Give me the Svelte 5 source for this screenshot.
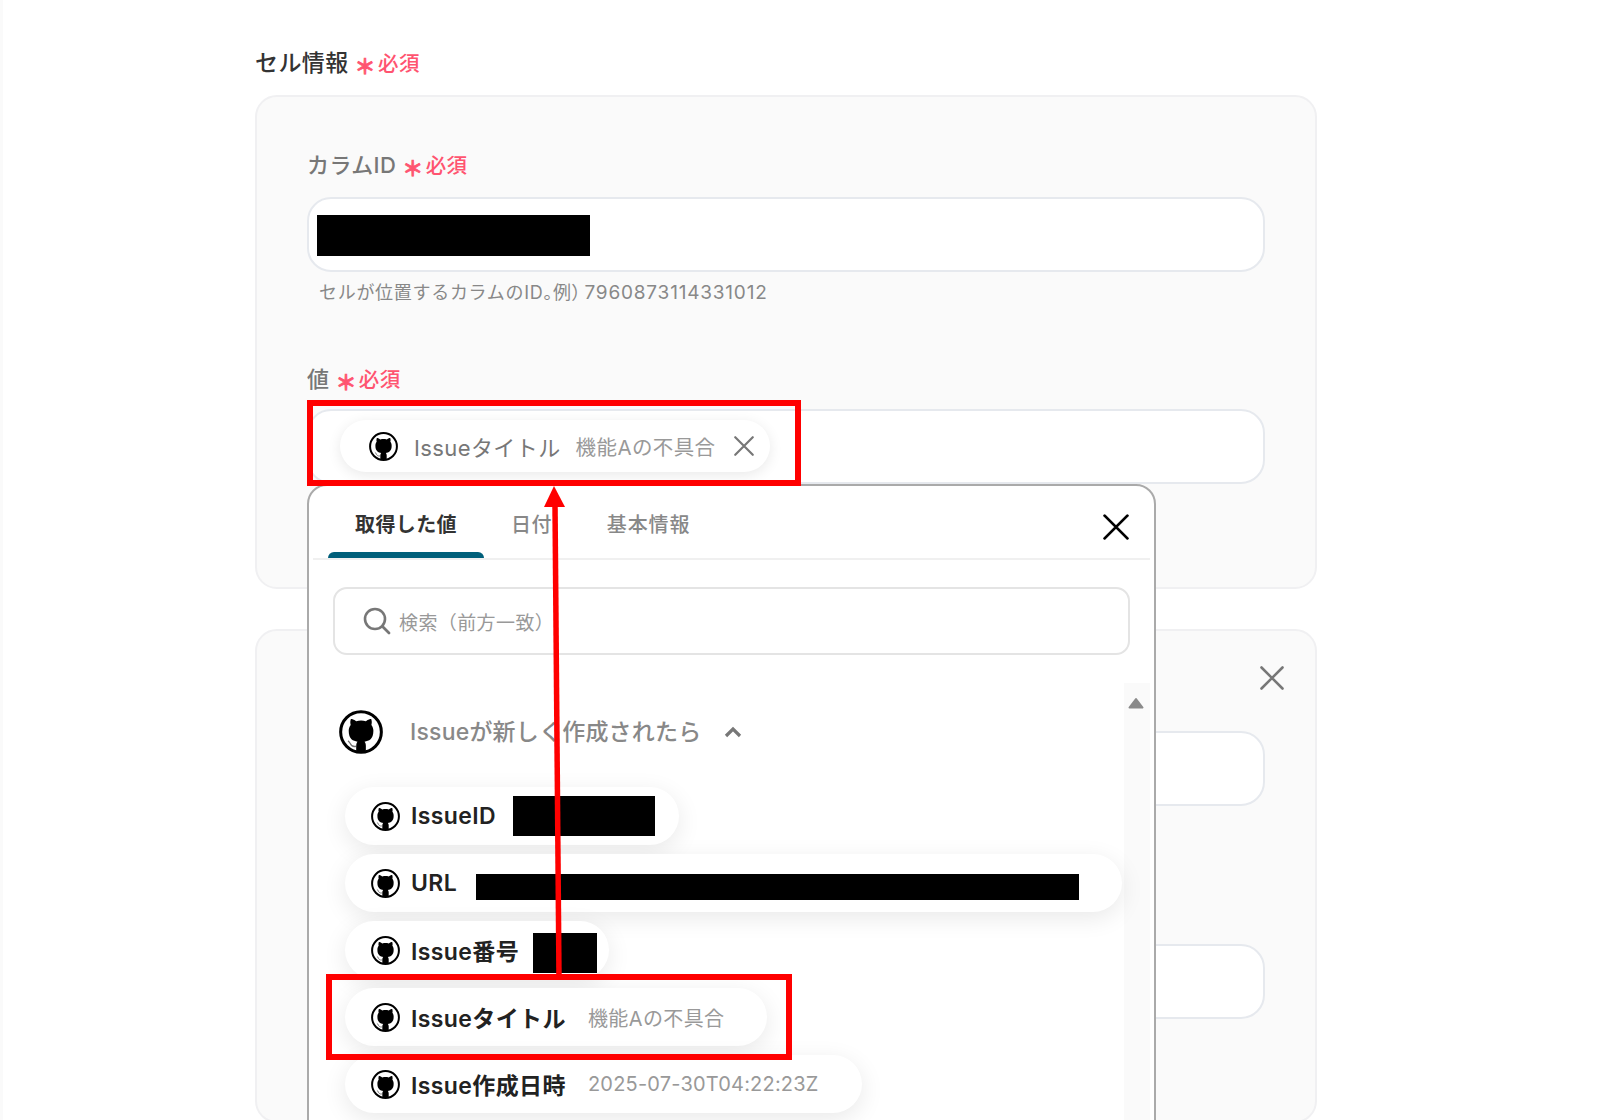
<script>
  const pills = [
    { label: 'IssueID', redact: [142, 40], gap: 17, pad: 24 },
    { label: 'URL', redact: [603, 26], gap: 19, wide: true, drop: 7 },
    { label: 'Issue番号', redact: [64, 40], gap: 14, pad: 12, drop: 6 },
    { label: 'Issueタイトル', value: '機能Aの不具合', pad: 42 },
    { label: 'Issue作成日時', value: '2025-07-30T04:22:23Z', pad: 43, tight: true }
  ];
</script>

{#snippet gh(cls)}
  <svg class={cls} viewBox="0 0 16 16" aria-hidden="true">
    <circle cx="8" cy="8" r="7.4" fill="#fff" stroke="#000" stroke-width="1.1" />
    <g transform="translate(8 0) scale(.88 1) translate(-8 0)">
      <path fill="#000" d="M6.02 15.3c0-.19-.01-.82-.01-1.59L6.05 12.6c.07-.52.28-.87.51-1.07-1.78-.2-3.64-.89-3.64-3.95 0-.87.31-1.59.82-2.15-.08-.2-.36-1.02.08-2.12 0 0 .67-.21 2.2.82.64-.18 1.32-.27 2-.27.68 0 1.36.09 2 .27 1.53-1.04 2.2-.82 2.2-.82.44 1.1.16 1.92.08 2.12.51.56.82 1.28.82 2.15 0 3.07-1.87 3.75-3.65 3.95.29.25.54.73.54 1.48L10 15.3z" />
      <path fill="none" stroke="#000" stroke-width=".5" opacity=".55" d="M6 13.2c-1.6.3-2.2-.4-2.5-1.1-.2-.4-.5-.7-.9-.9" />
    </g>
  </svg>
{/snippet}

{#snippet cross(cls)}
  <svg class={cls} viewBox="0 0 24 24" aria-hidden="true">
    <path d="M1.5 1.5 22.5 22.5M22.5 1.5 1.5 22.5" fill="none" stroke="currentColor" stroke-width="2.6" stroke-linecap="round" />
  </svg>
{/snippet}

{#snippet req()}
  <span class="ast">＊</span><span class="must">必須</span>
{/snippet}

<div class="root">
  <div class="edge"></div>
  <main class="page">
    <h2 class="title">セル情報{@render req()}</h2>

    <section class="card first">
      <div class="label">カラムID{@render req()}</div>
      <div class="input"><span class="black"></span></div>
      <p class="help">セルが位置するカラムのID<span class="punct">。例）</span><span class="digits">7960873114331012</span></p>
      <div class="label val">値{@render req()}</div>
      <div class="input chipbox">
        <div class="chip">
          {@render gh('ico')}
          <span class="chipname">Issueタイトル</span>
          <span class="chipval">機能Aの不具合</span>
          {@render cross('chipx')}
        </div>
      </div>
    </section>

    <section class="card second">
      {@render cross('cardx')}
      <div class="input"></div>
      <div class="input lower"></div>
    </section>
  </main>

  <div class="popup">
    <div class="tabs">
      <span class="tab on">取得した値</span>
      <span class="tab">日付</span>
      <span class="tab wider">基本情報</span>
      {@render cross('popx')}
    </div>
    <div class="search">
      <svg class="lens" viewBox="0 0 28 28" aria-hidden="true">
        <circle cx="12" cy="12" r="10" fill="none" stroke="#777" stroke-width="2.6" />
        <path d="M19.5 19.5 26 26" stroke="#777" stroke-width="2.8" stroke-linecap="round" />
      </svg>
      <span>検索（前方一致）</span>
    </div>
    <div class="list">
      <div class="scroll">
        <svg viewBox="0 0 16 12" aria-hidden="true"><path d="M8 2 14.5 10.5H1.5z" fill="#8a8a8a" stroke="#8a8a8a" stroke-width="2" stroke-linejoin="round" /></svg>
      </div>
      <div class="group">
        {@render gh('bigico')}
        <span class="gname">Issueが新しく作成されたら</span>
        <svg class="chev" viewBox="0 0 18 12" aria-hidden="true">
          <path d="M2 10 9 3l7 7" fill="none" stroke="#777" stroke-width="3.2" />
        </svg>
      </div>
      <div class="pills">
        {#each pills as p}
          <div class="pill" class:wide={p.wide} style="padding-right:{p.pad ?? 26}px">
            {@render gh('ico')}
            <span class="pname">{p.label}</span>
            {#if p.value}<span class="pval" class:tight={p.tight}>{p.value}</span>{/if}
            {#if p.redact}
              <span class="redact" style="width:{p.redact[0]}px;height:{p.redact[1]}px;margin-left:{p.gap}px;margin-top:{p.drop ?? 0}px"></span>
            {/if}
          </div>
        {/each}
      </div>
    </div>
  </div>

  <svg class="marks" viewBox="0 0 1600 1120" aria-hidden="true">
    <rect x="310" y="403" width="488" height="80" fill="none" stroke="#f00" stroke-width="6" />
    <rect x="329" y="977" width="460" height="80" fill="none" stroke="#f00" stroke-width="6" />
    <path d="M559 977 555 505" fill="none" stroke="#f00" stroke-width="5.5" />
    <path d="M554 486 565 507H544z" fill="#f00" />
  </svg>
</div>

<style>
  :global(body) {
    margin: 0;
    background: #fff;
  }
  .root {
    position: relative;
    width: 1600px;
    height: 1120px;
    overflow: hidden;
    background: #fff;
    font-family: Inter, "Noto Sans CJK JP", sans-serif;
    letter-spacing: 0.4px;
  }
  .marks {
    position: absolute;
    left: 0;
    top: 0;
    width: 1600px;
    height: 1120px;
    pointer-events: none;
  }
  .edge {
    position: absolute;
    left: 0;
    top: 0;
    bottom: 0;
    width: 3px;
    background: #fafafa;
  }
  .page {
    width: 1062px;
    margin-left: 255px;
    padding-top: 47px;
    box-sizing: border-box;
  }
  .title {
    margin: 0 0 15px;
    height: 33px;
    font-size: 23px;
    line-height: 33px;
    font-weight: 500;
    color: #333;
  }
  .ast {
    display: inline-block;
    margin-left: 6px;
    font-family: "Noto Sans CJK JP", sans-serif;
    font-size: 21px;
    font-weight: 700;
    line-height: 20px;
    vertical-align: -3px;
    color: #ff5470;
    -webkit-text-stroke: 0.7px #ff5470;
  }
  .must {
    margin-left: 2px;
    font-size: 20.5px;
    font-weight: 500;
    color: #ff5470;
  }
  .card {
    box-sizing: border-box;
    border: 2px solid #f0f0f2;
    border-radius: 22px;
    background: #fafafa;
    padding: 0 50px;
    position: relative;
  }
  .first {
    height: 494px;
    padding-top: 52px;
  }
  .second {
    height: 494px;
    margin-top: 40px;
    padding-top: 100px;
  }
  .label {
    height: 33px;
    font-size: 22px;
    line-height: 33px;
    font-weight: 500;
    color: #777;
    margin-bottom: 15px;
  }
  .val {
    margin-bottom: 13px;
    margin-top: 57px;
  }
  .input {
    box-sizing: border-box;
    height: 75px;
    border: 2px solid #e6e9ee;
    border-radius: 24px;
    background: #fff;
    padding: 16px 8px;
  }
  .black {
    display: block;
    width: 273px;
    height: 41px;
    background: #000;
  }
  .help {
    margin: 8px 0 0 12px;
    height: 26px;
    font-size: 18px;
    line-height: 26px;
    letter-spacing: 0.7px;
    color: #888;
  }
  .punct {
    font-feature-settings: "palt";
  }
  .digits {
    margin-left: 3px;
    font-size: 19px;
    letter-spacing: 0.8px;
  }
  .chipbox {
    padding: 9px 31px;
  }
  .chip {
    display: inline-flex;
    align-items: center;
    height: 52px;
    width: 430px;
    box-sizing: border-box;
    padding-left: 29px;
    border-radius: 26px;
    background: #fff;
    box-shadow: 0 3px 14px rgba(0, 0, 0, 0.09);
  }
  .ico {
    width: 29px;
    height: 29px;
    flex: none;
  }
  .chipname {
    margin-left: 16px;
    font-size: 22px;
    color: #777;
  }
  .chipval {
    margin-left: 15px;
    font-size: 20.5px;
    color: #999;
  }
  .chip :global(.chipx) {
    width: 20px;
    height: 20px;
    margin-left: 18px;
    color: #777;
  }
  .second :global(.cardx) {
    position: absolute;
    right: 31px;
    top: 35px;
    width: 24px;
    height: 24px;
    color: #777;
  }
  .lower {
    margin-top: 138px;
  }
  .popup {
    position: absolute;
    left: 307px;
    top: 484px;
    width: 849px;
    height: 680px;
    box-sizing: border-box;
    border: 2px solid #aaa;
    border-radius: 20px;
    background: #fff;
    padding: 0 4px;
  }
  .tabs {
    display: flex;
    align-items: center;
    height: 74px;
    border-bottom: 2px solid #f0f0f0;
    padding-left: 15px;
    position: relative;
    box-sizing: border-box;
  }
  .tab {
    position: relative;
    box-sizing: border-box;
    height: 72px;
    line-height: 78px;
    padding: 0 27px;
    font-size: 20px;
    font-weight: 500;
    color: #888;
  }
  .tab + .tab {
    padding: 0;
    margin-left: 27px;
  }
  .tab + .tab + .tab {
    margin-left: 55px;
  }
  .wider {
    letter-spacing: 0.9px;
  }
  .on {
    font-weight: 700;
    color: #333;
  }
  .on::after {
    content: "";
    position: absolute;
    left: 0;
    right: 0;
    bottom: 0;
    height: 6px;
    border-radius: 6px 6px 0 0;
    background: #005f7a;
  }
  .tabs :global(.popx) {
    position: absolute;
    right: 21px;
    top: 28px;
    width: 26px;
    height: 26px;
    color: #000;
  }
  .search {
    display: flex;
    align-items: center;
    box-sizing: border-box;
    height: 68px;
    margin: 27px 20px 0 20px;
    padding-left: 28px;
    border: 2px solid #e4e4e4;
    border-radius: 14px;
    font-size: 19px;
    color: #999;
  }
  .lens {
    width: 28px;
    height: 28px;
    margin-right: 8px;
  }
  .list {
    position: relative;
    padding-left: 27px;
    margin-top: 28px;
  }
  .scroll {
    position: absolute;
    right: 0;
    top: 0;
    width: 26px;
    height: 440px;
    background: #fafafa;
  }
  .scroll svg {
    display: block;
    width: 16px;
    height: 12px;
    margin: 14px 6px 0 4px;
  }
  .group {
    display: flex;
    align-items: center;
    height: 44px;
    margin-top: 27px;
    position: absolute;
    top: 0;
    left: 26px;
  }
  .bigico {
    width: 44px;
    height: 44px;
    flex: none;
  }
  .gname {
    margin-left: 27px;
    margin-bottom: 4px;
    font-size: 23px;
    font-weight: 500;
    letter-spacing: 0.2px;
    color: #888;
  }
  .chev {
    width: 18px;
    height: 12px;
    margin-left: 23px;
  }
  .pills {
    position: relative;
    padding-top: 104px;
    display: flex;
    flex-direction: column;
    align-items: flex-start;
    gap: 9px;
  }
  .pill {
    display: flex;
    align-items: center;
    height: 58px;
    box-sizing: border-box;
    padding-left: 26px;
    margin-left: 5px;
    border-radius: 29px;
    background: #fff;
    box-shadow: 0 6px 24px rgba(0, 0, 0, 0.09);
  }
  .wide {
    width: 777px;
  }
  .pname {
    margin-left: 11px;
    font-size: 23px;
    font-weight: 600;
    color: #222;
  }
  .pval {
    margin-left: 22px;
    font-size: 20px;
    color: #999;
  }
  .tight {
    letter-spacing: 0.2px;
  }
  .redact {
    background: #000;
    display: block;
  }
</style>
